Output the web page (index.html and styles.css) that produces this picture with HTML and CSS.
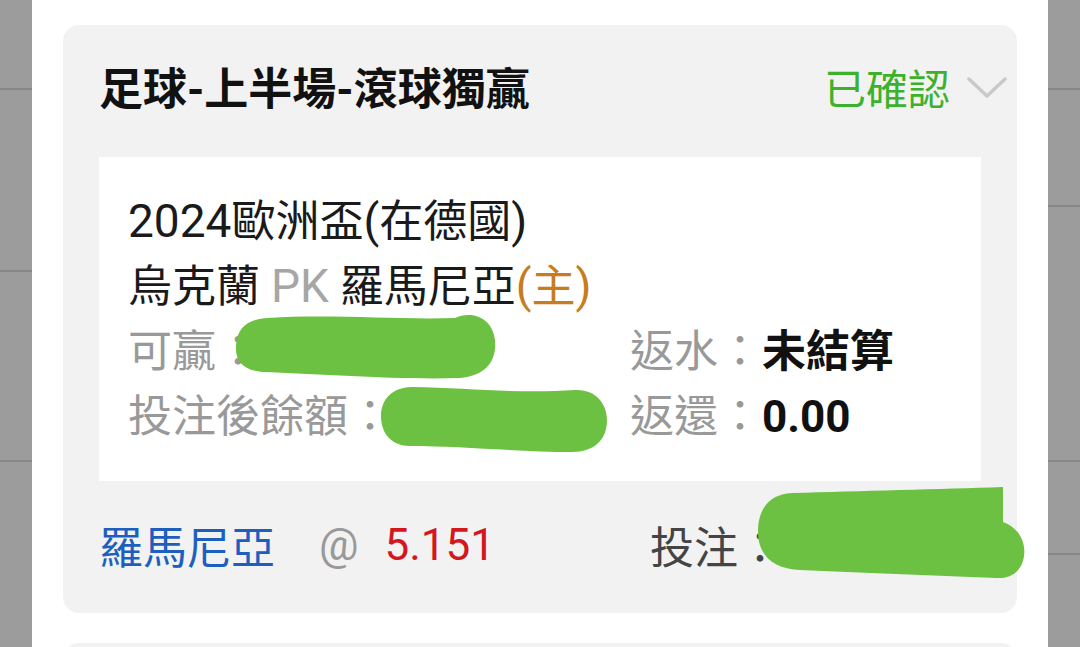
FILE: index.html
```html
<!DOCTYPE html>
<html lang="zh-Hant">
  <head>
    <meta charset="UTF-8" />
    <meta name="viewport" content="width=device-width, initial-scale=1.0" />
    <title>注單</title>
    <link rel="stylesheet" href="styles.css">
  </head>
  <body>
    <div class="screen">
      <div class="strip strip-left">
        <div class="seg l1"></div>
        <div class="seg l2"></div>
        <div class="seg l3"></div>
      </div>

      <div class="panel">
        <div class="bet-card">
          <div class="bet-head">
            <h2 class="bet-title">足球-上半場-滾球獨贏</h2>
            <div class="bet-status">
              <span class="status-text">已確認</span>
              <svg class="chevron" width="40" height="24" viewBox="0 0 40 24">
                <polyline points="2,3 20,20 38,3" fill="none" stroke="#c9c9c9" stroke-width="3.5" stroke-linecap="round" stroke-linejoin="round" />
              </svg>
            </div>
          </div>

          <div class="bet-body">
            <div class="line"><span class="lt">2024</span>歐洲盃<span class="lt">(</span>在德國<span class="lt">)</span></div>
            <div class="line">烏克蘭 <span class="pk lt">PK</span> 羅馬尼亞<span class="home"><span class="lt">(</span>主<span class="lt">)</span></span></div>
            <div class="line-grid">
              <div class="label">可贏：</div>
              <div class="label">返水：<span class="value">未結算</span></div>
              <div class="label">投注後餘額：</div>
              <div class="label">返還：<span class="value">0.00</span></div>
            </div>
          </div>

          <div class="bet-foot">
            <div class="pick">
              <span class="team">羅馬尼亞</span>
              <span class="at">@</span>
              <span class="odds">5.151</span>
            </div>
            <div class="stake">投注：</div>
          </div>
        </div>

        <div class="bet-card next"></div>
      </div>

      <div class="strip strip-right">
        <div class="seg r1"></div>
        <div class="seg r2"></div>
        <div class="seg r3"></div>
        <div class="seg r4"></div>
      </div>
    </div>

    <!-- redaction marks over the amounts -->
    <svg class="marks" width="1080" height="647" viewBox="0 0 1080 647">
      <g fill="#6cc142">
        <path d="M268 318 C330 314 400 320 455 318 C470 311 492 316 495 340 C497 362 485 376 460 378 C400 380 320 374 262 372 C242 370 235 360 236 346 C237 326 250 319 268 318 Z" />
        <path d="M412 387 C470 388 520 394 575 390 C596 389 607 404 607 420 C607 440 594 452 572 452 C520 452 460 446 410 446 C392 446 381 434 381 416 C381 398 394 387 412 387 Z" />
        <path d="M792 493 C860 491 940 489 1003 487 L1003 522 C1020 528 1026 544 1024 556 C1022 572 1010 579 996 578 C930 575 860 573 800 570 C774 569 758 556 758 532 C758 508 770 494 792 493 Z" />
      </g>
    </svg>
  </body>
</html>
```

FILE: styles.css
```css
* {
  margin: 0;
  padding: 0;
  box-sizing: border-box;
}

body {
  font-family: Roboto, "Noto Sans CJK TC", sans-serif;
  width: 1080px;
  height: 647px;
  overflow: hidden;
  position: relative;
  background-color: #9c9c9c;
}

.screen {
  display: flex;
  height: 100%;
}

.strip {
  width: 32px;
  background-color: #9c9c9c;
  display: flex;
  flex-direction: column;
}

.strip .seg {
  border-bottom: 2px solid #878787;
}

.l1 { height: 90px; }
.l2 { height: 182px; }
.l3 { height: 190px; }

.r1 { height: 90px; }
.r2 { height: 117px; }
.r3 { height: 255px; }
.r4 { height: 93px; }

.panel {
  flex: 1;
  background-color: #fff;
  padding: 25px 31px 0;
  display: flex;
  flex-direction: column;
  gap: 30px;
  overflow: hidden;
}

.bet-card {
  background-color: #f2f2f2;
  border-radius: 16px;
  flex-shrink: 0;
}

.bet-card.next {
  height: 40px;
}

.bet-head {
  height: 132px;
  display: flex;
  align-items: center;
  justify-content: space-between;
  padding: 0 10px 10px 36px;
}

.bet-title {
  font-size: 44px;
  font-weight: 700;
  color: #111;
}

.bet-status {
  display: flex;
  align-items: center;
  gap: 17px;
}

.status-text {
  font-size: 42px;
  color: #3cb22c;
}

.chevron {
  display: block;
  margin-top: 4px;
}

.bet-body {
  margin: 0 36px;
  background-color: #fff;
  padding: 33px 29px 31px;
  font-size: 44px;
  line-height: 65px;
  color: #1a1a1a;
}

.line {
  height: 65px;
}

.lt {
  font-size: 46px;
  line-height: 1;
}

.pk {
  color: #a6a6a6;
}

.home {
  color: #c67d22;
}

.line-grid {
  display: grid;
  grid-template-columns: 502px 1fr;
}

.label {
  color: #999;
}

.value {
  color: #111;
  font-weight: 700;
}

.bet-foot {
  height: 132px;
  display: grid;
  grid-template-columns: 551px 1fr;
  align-items: center;
  padding: 0 36px 4px;
  font-size: 44px;
}

.pick {
  display: flex;
  align-items: center;
}

.team {
  color: #1c5fbe;
}

.at {
  color: #999;
  margin-left: 44px;
}

.odds {
  color: #d4171c;
  margin-left: 26px;
}

.stake {
  color: #444;
}

.marks {
  position: absolute;
  left: 0;
  top: 0;
  pointer-events: none;
}
```
